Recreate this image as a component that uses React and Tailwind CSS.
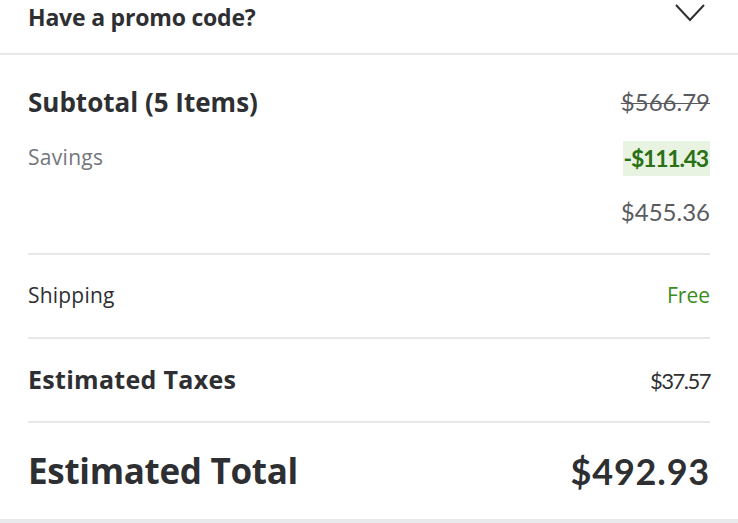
const label = { fontFamily: "'Open Sans', Lato, sans-serif" };
const num = { fontFamily: "Lato, 'Open Sans', sans-serif" };

const App = () => {
  return (
    <div className="w-[738px] h-[523px] bg-white overflow-hidden text-[#2e2f32]">
      {/* promo code row (scrolled, top cut off) */}
      <div className="flex justify-between items-start h-[55px] px-7 -mt-[2px]">
        <span className="text-[23px] font-bold leading-[38px] tracking-[-0.2px]" style={label}>Have a promo code?</span>
        <svg className="mt-[4px] mr-[4px]" width="32" height="20" viewBox="0 0 32 20" fill="none" stroke="#2e2f32" strokeWidth="2">
          <path d="M2 3 L16 18 L30 3" />
        </svg>
      </div>
      <div className="h-[2px] bg-[#e6e7e8]" />

      <div className="px-7">
        {/* subtotal block */}
        <div className="pt-[28px] pb-[23px] border-b-2 border-[#e6e7e8]">
          <div className="flex justify-between items-center h-[38px]">
            <span className="text-[26px] font-bold" style={label}>Subtotal (5 Items)</span>
            <span className="text-[24px] text-[#5a5b5e] line-through decoration-1" style={num}>$566.79</span>
          </div>
          <div className="flex justify-between items-center mt-[19px] h-[36px]">
            <span className="text-[21px] text-[#74767c] tracking-[0.3px]" style={label}>Savings</span>
            <span className="text-[23px] font-bold text-[#2a7014] bg-[#e8f3e2] pl-[1px] pr-[2px] h-[35px] leading-[35px] tracking-[-1.2px]" style={num}>-$111.43</span>
          </div>
          <div className="flex justify-end items-center mt-[18px] h-[36px]">
            <span className="text-[24px] text-[#5a5b5e]" style={num}>$455.36</span>
          </div>
        </div>

        {/* shipping */}
        <div className="flex justify-between items-center h-[84px] border-b-2 border-[#e6e7e8]">
          <span className="text-[21px] text-[#2e2f32] tracking-[0.2px]" style={label}>Shipping</span>
          <span className="text-[21px] text-[#3b8b20]" style={label}>Free</span>
        </div>

        {/* taxes */}
        <div className="flex justify-between items-center h-[84px] border-b-2 border-[#e6e7e8]">
          <span className="text-[25px] font-bold tracking-[0.3px]" style={label}>Estimated Taxes</span>
          <span className="text-[22px] tracking-[-1.5px]" style={num}>$37.57</span>
        </div>

        {/* total */}
        <div className="flex justify-between items-center h-[96px]">
          <span className="text-[35px] font-bold tracking-[-0.3px]" style={label}>Estimated Total</span>
          <span className="text-[36px] font-bold tracking-[0.8px]" style={num}>$492.93</span>
        </div>
      </div>
      <div className="h-[6px] bg-[#e9eaeb]" />
    </div>
  );
};

export default App;
